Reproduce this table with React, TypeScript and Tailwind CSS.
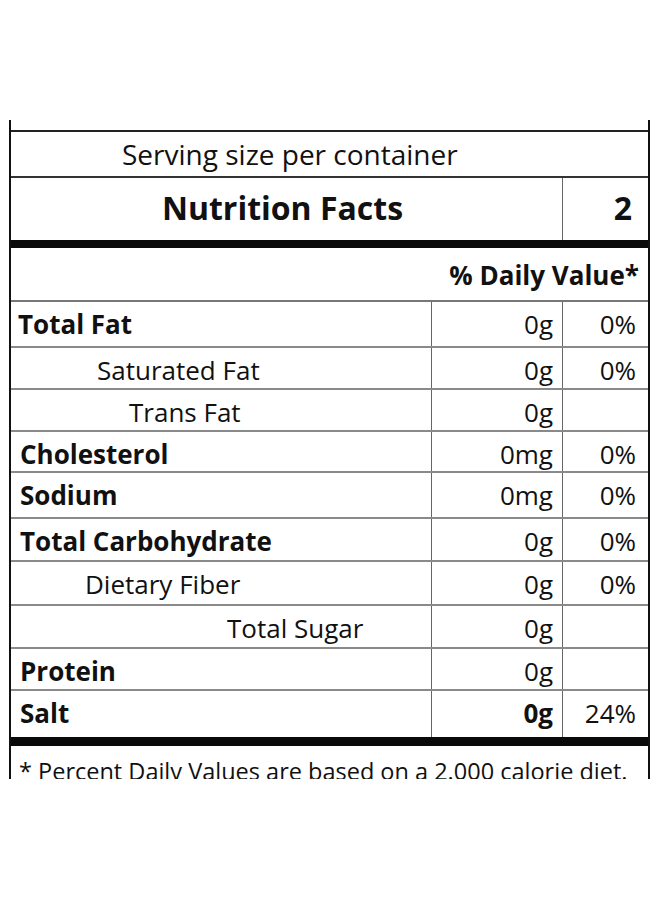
import React from "react";

type Row = { label: string; bold?: boolean; indent: number; amt: string; amtBold?: boolean; dv: string; h: number };

const rows: Row[] = [
  { label: "Total Fat", bold: true, indent: 7, amt: "0g", dv: "0%", h: 46 },
  { label: "Saturated Fat", indent: 86, amt: "0g", dv: "0%", h: 42 },
  { label: "Trans Fat", indent: 118, amt: "0g", dv: "", h: 42 },
  { label: "Cholesterol", bold: true, indent: 9, amt: "0mg", dv: "0%", h: 41 },
  { label: "Sodium", bold: true, indent: 9, amt: "0mg", dv: "0%", h: 46 },
  { label: "Total Carbohydrate", bold: true, indent: 9, amt: "0g", dv: "0%", h: 43 },
  { label: "Dietary Fiber", indent: 74, amt: "0g", dv: "0%", h: 44 },
  { label: "Total Sugar", indent: 216, amt: "0g", dv: "", h: 43 },
  { label: "Protein", bold: true, indent: 9, amt: "0g", dv: "", h: 42 },
  { label: "Salt", bold: true, indent: 9, amt: "0g", amtBold: true, dv: "24%", h: 46 },
];

export default function App() {
  return (
    <div className="w-[660px] h-[900px] bg-white text-[#111]" style={{ fontFamily: '"Open Sans", "Noto Sans", sans-serif' }}>
      <div className="pt-[120px] pl-[9px]">
        <div className="w-[641px] h-[659px] overflow-hidden border-l-2 border-r-2 border-[#111] flex flex-col">
          <div className="h-[12px] shrink-0 border-b-2 border-[#222]" />
          <div className="h-[46px] shrink-0 border-b-2 border-[#333] pl-[111px] pt-[5px] text-[28px] leading-[34px]">
            Serving size per container
          </div>
          <div className="h-[62px] shrink-0 grid grid-cols-[551px_1fr]">
            <div className="flex justify-center pt-[8px] pr-[8px] text-[32px] leading-[44px] font-bold">Nutrition Facts</div>
            <div className="border-l border-[#666] flex justify-end pr-[16px] pt-[8px] text-[32px] leading-[44px] font-bold">2</div>
          </div>
          <div className="h-[8px] shrink-0 bg-[#0a0a0a]" />
          <div className="h-[54px] shrink-0 border-b-2 border-[#777] flex justify-end pr-[9px] pt-[10px] text-[26px] leading-[34px] font-bold">
            % Daily Value*
          </div>
          {rows.map((r, i) => (
            <div
              key={i}
              className={`shrink-0 grid grid-cols-[420px_131px_1fr] text-[26px] leading-[30px] ${i === rows.length - 1 ? "" : "border-b-2 border-[#8a8a8a]"}`}
              style={{ height: r.h }}
            >
              <div className={`pt-[7px] ${r.bold ? "font-bold" : ""}`} style={{ paddingLeft: r.indent }}>
                {r.label}
              </div>
              <div className={`border-l border-[#666] flex justify-end pr-[9px] pt-[7px] ${r.amtBold ? "font-bold" : ""}`}>{r.amt}</div>
              <div className="border-l border-[#666] flex justify-end pr-[12px] pt-[7px]">{r.dv}</div>
            </div>
          ))}
          <div className="h-[9px] shrink-0 bg-[#0a0a0a]" />
          <div className="pl-[8px] pt-[10px] text-[23.5px] leading-[30px] whitespace-nowrap">
            * Percent Daily Values are based on a 2.000 calorie diet.
          </div>
        </div>
      </div>
    </div>
  );
}
